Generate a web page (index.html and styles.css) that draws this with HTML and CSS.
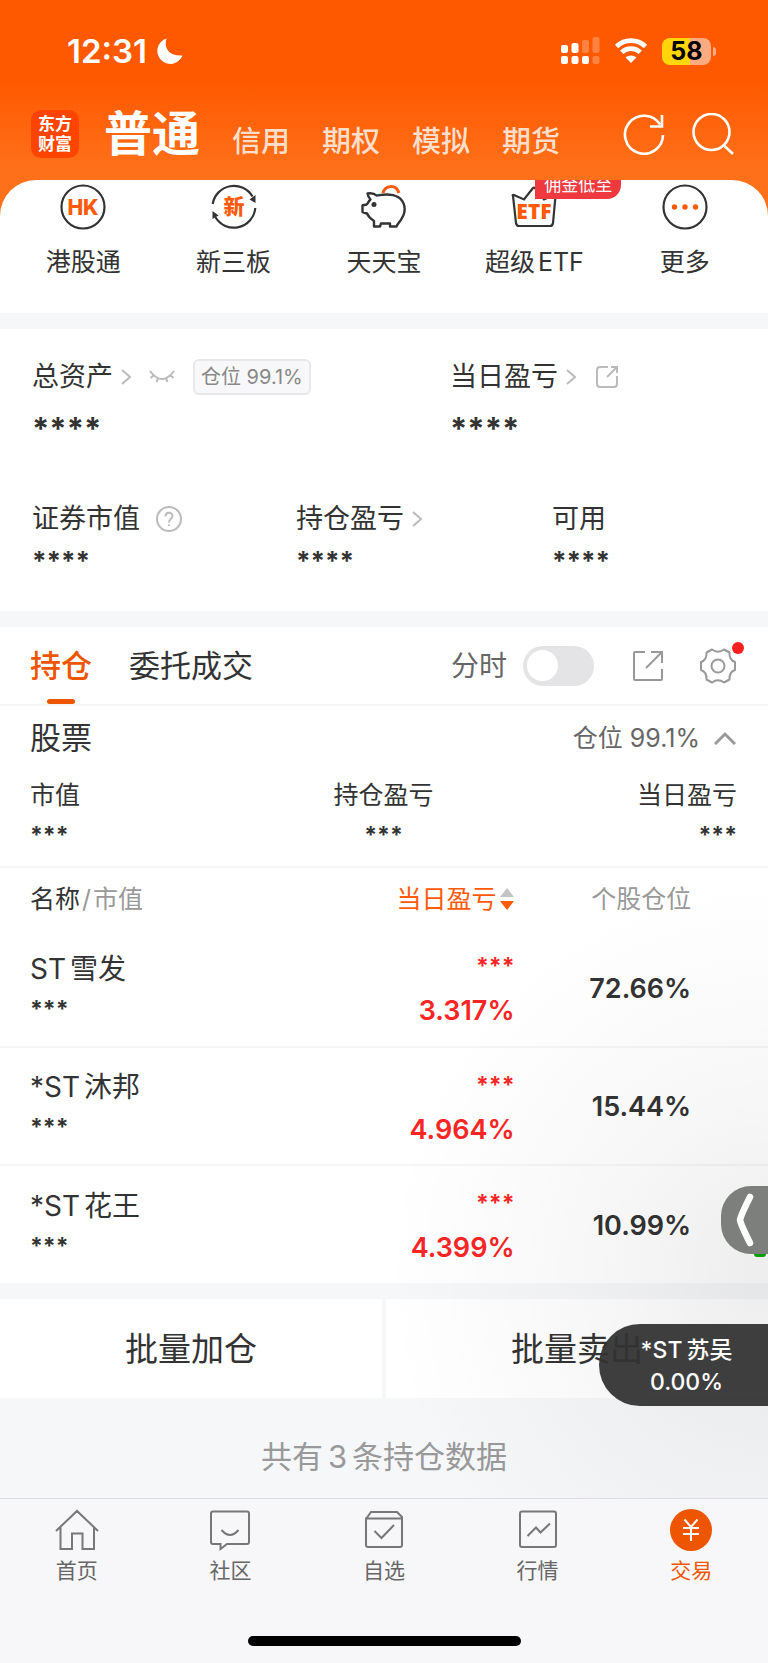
FILE: index.html
```
<!DOCTYPE html>
<html lang="zh-CN">
<head>
    <meta charset="UTF-8">
    <meta name="viewport" content="width=device-width, initial-scale=1.0">
    <title>交易</title>
    <link rel="stylesheet" href="styles.css">
</head>
<body>
    <header class="header">
        <div class="status-bar">
            <span class="time">12:31</span>
            <svg class="moon" width="26" height="26" viewBox="0 0 26 26"><path d="M9.500 .5C7 8 10 18.500 25.500 17.500A13 13 0 1 1 9.500 .5Z" fill="#fff"/></svg>
            <svg class="signal" width="39" height="28" viewBox="0 0 39 28" fill="#fff">
                <rect x="0" y="8" width="7" height="8" rx="2"/><rect x="10.500" y="6" width="7" height="10" rx="2"/>
                <rect x="21" y="3" width="7" height="13" rx="2" opacity=".25"/><rect x="31.500" y="0" width="7" height="16" rx="2" opacity=".25"/>
                <rect x="0" y="19" width="7" height="8" rx="2"/><rect x="10.500" y="19" width="7" height="8" rx="2"/><rect x="21" y="19" width="7" height="8" rx="2"/>
                <rect x="31.500" y="19" width="7" height="8" rx="2" opacity=".25"/>
            </svg>
            <svg class="wifi" width="34" height="26" viewBox="0 0 34 26">
                <path d="M2.500 8.500A21 21 0 0 1 31.500 8.500M7.700 14.300A13.500 13.500 0 0 1 26.300 14.300" fill="none" stroke="#fff" stroke-width="4.800"/>
                <path d="M11.500 19.300Q17 15.500 22.500 19.300L17 25Z" fill="#fff"/>
            </svg>
            <div class="battery">58</div>
        </div>
        <nav class="top-nav">
            <a href="#" class="logo">东方<br>财富</a>
            <a href="#" class="current">普通</a>
            <a href="#">信用</a>
            <a href="#">期权</a>
            <a href="#">模拟</a>
            <a href="#">期货</a>
            <div class="top-actions">
                <button type="button" aria-label="刷新">
                    <svg width="42" height="42" viewBox="0 0 42 42" fill="none" stroke="#fff" stroke-width="2.600"><path d="M40 22A19 19 0 1 1 37 11.500M39 2V13.500H27"/></svg>
                </button>
                <button type="button" aria-label="搜索">
                    <svg width="42" height="42" viewBox="0 0 42 42" fill="none" stroke="#fff" stroke-width="2.600"><circle cx="19.500" cy="19" r="18"/><path d="M31.500 32L41 41"/></svg>
                </button>
            </div>
        </nav>
    </header>

    <main>
        <nav class="shortcuts">
            <a href="#">
                <svg width="46" height="46" viewBox="0 0 46 46"><circle cx="23" cy="23" r="21.500" fill="none" stroke="#333" stroke-width="2.200"/><text x="23" y="30.500" class="icon-text">HK</text></svg>
                <span>港股通</span>
            </a>
            <a href="#">
                <svg width="46" height="46" viewBox="0 0 46 46">
                    <path d="M1.700 20A21.500 21.500 0 0 1 41.500 12.500M44.300 24A21.500 21.500 0 0 1 4.300 33" fill="none" stroke="#333" stroke-width="2.200"/>
                    <path d="M44.500 11L44.500 19L38.500 15.500ZM1.500 35L1.500 27L7.500 31.500Z" fill="#333"/>
                    <text x="23" y="30" class="icon-text">新</text>
                </svg>
                <span>新三板</span>
            </a>
            <a href="#">
                <svg width="46" height="46" viewBox="0 0 46 46" fill="none" stroke="#333" stroke-width="2.400" stroke-linejoin="round">
                    <path d="M15.500 11.500C13 9 10 9 6.500 9.500C7 12.500 8 14 9.500 15.500C7 17.500 7 20 5.500 20.500L1.500 21.500V28L6 29.500C7.500 33 10 35 13 37V42.500H19L20 39.500H29V42.500H35.500C37 39 39 38 41 34C46 26 43.500 17 37 13C30 9 22 10.500 15.500 11.500Z"/>
                    <circle cx="13" cy="20.500" r="2.500" fill="#333" stroke="none"/>
                    <path d="M22 9C24 1 35 0 38 9" stroke="#ff5a0a" stroke-width="3"/>
                </svg>
                <span>天天宝</span>
            </a>
            <a href="#">
                <svg width="46" height="46" viewBox="0 0 46 46">
                    <path d="M2 12Q1 10.500 3 11L13 15.500L22 4Q23 3 24 4L33 15.500L43 11Q45 10.500 44.500 12L42 39Q41.500 42 39 42H8Q5.500 42 5 39Z" fill="none" stroke="#333" stroke-width="2.200"/>
                    <text x="23" y="35" class="icon-text etf">ETF</text>
                </svg>
                <span>超级<span class="latin">ETF</span></span>
                <em class="badge">佣金低至</em>
            </a>
            <a href="#">
                <svg width="46" height="46" viewBox="0 0 46 46"><circle cx="23" cy="23" r="21.500" fill="none" stroke="#333" stroke-width="2.200"/><g fill="#ff5a0a"><circle cx="12.500" cy="23" r="2.700"/><circle cx="23" cy="23" r="2.700"/><circle cx="33.500" cy="23" r="2.700"/></g></svg>
                <span>更多</span>
            </a>
        </nav>

        <section class="assets">
            <div class="assets-main">
                <div>
                    <div class="label">总资产
                        <svg class="arrow" width="10" height="16" viewBox="0 0 10 16"><path d="M1 1L9 8L1 15"/></svg>
                        <svg class="eye" width="26" height="14" viewBox="0 0 26 14"><path d="M1 1Q13 17 25 1M5 5L1.500 8M9 8.500L7.500 12M17 8.500L18.500 12M21 5L24.500 8"/></svg>
                        <span class="ratio">仓位 99.1%</span>
                    </div>
                    <div class="stars large">****</div>
                </div>
                <div>
                    <div class="label">当日盈亏
                        <svg class="arrow" width="10" height="16" viewBox="0 0 10 16"><path d="M1 1L9 8L1 15"/></svg>
                        <svg class="share" width="24" height="24" viewBox="0 0 24 24"><path d="M13 2H5Q2 2 2 5V19Q2 22 5 22H19Q22 22 22 19V11M12 12L22 2M16 2H22V8"/></svg>
                    </div>
                    <div class="stars large">****</div>
                </div>
            </div>
            <div class="assets-sub">
                <div>
                    <div class="label">证券市值
                        <svg class="help" width="26" height="26" viewBox="0 0 26 26"><circle cx="13" cy="13" r="12"/><path d="M9.500 10.500C9.500 5.500 16.500 5.500 16.500 10C16.500 13 13 12.500 13 16.500M13 18.500V20"/></svg>
                    </div>
                    <div class="stars">****</div>
                </div>
                <div>
                    <div class="label">持仓盈亏
                        <svg class="arrow" width="10" height="16" viewBox="0 0 10 16"><path d="M1 1L9 8L1 15"/></svg>
                    </div>
                    <div class="stars">****</div>
                </div>
                <div>
                    <div class="label">可用</div>
                    <div class="stars">****</div>
                </div>
            </div>
        </section>

        <section class="holdings">
            <div class="tabs">
                <button type="button" class="tab active">持仓</button>
                <button type="button" class="tab">委托成交</button>
                <label class="switch">分时<input type="checkbox"></label>
                <button type="button" aria-label="分享">
                    <svg width="32" height="32" viewBox="0 0 32 32" fill="none" stroke="#999" stroke-width="2"><path d="M13 2H3Q2 2 2 3V29Q2 30 3 30H29Q30 30 30 29V19M14 18L30 2M19 2H30V13"/></svg>
                </button>
                <button type="button" class="settings" aria-label="设置">
                    <svg width="36" height="36" viewBox="0 0 36 36" fill="none" stroke="#999" stroke-width="2" stroke-linejoin="round"><path d="M12 1.500Q18 6 24 1.500L29.500 4.500Q29 12 35 14V22Q29 24 29.500 31.500L24 34.500Q18 30 12 34.500L6.500 31.500Q7 24 1 22V14Q7 12 6.500 4.500Z"/><circle cx="18" cy="18" r="6.500"/></svg>
                </button>
            </div>
            <div class="group-title">
                <h2>股票</h2>
                <button type="button">仓位 99.1%
                    <svg width="22" height="14" viewBox="0 0 22 14" fill="none" stroke="#999" stroke-width="3"><path d="M1 13L11 3L21 13"/></svg>
                </button>
            </div>
            <div class="summary">
                <div>市值<div class="stars small">***</div></div>
                <div>持仓盈亏<div class="stars small">***</div></div>
                <div>当日盈亏<div class="stars small">***</div></div>
            </div>
            <table>
                <thead>
                    <tr>
                        <th>名称<span>/</span><span>市值</span></th>
                        <th class="sorted">当日盈亏<svg width="16" height="22" viewBox="0 0 16 22"><path d="M8 0L15 9H1Z" fill="#c4c4c4"/><path d="M1 13H15L8 22Z" fill="#ff5a0a"/></svg></th>
                        <th>个股仓位</th>
                        <th></th>
                    </tr>
                </thead>
                <tbody>
                    <tr>
                        <td><div class="name">ST<span>雪发</span></div><div class="stars small">***</div></td>
                        <td class="up"><div class="stars small">***</div><div class="rate">3.317%</div></td>
                        <td>72.66%</td>
                        <td></td>
                    </tr>
                    <tr>
                        <td><div class="name">*ST<span>沐邦</span></div><div class="stars small">***</div></td>
                        <td class="up"><div class="stars small">***</div><div class="rate">4.964%</div></td>
                        <td>15.44%</td>
                        <td></td>
                    </tr>
                    <tr>
                        <td><div class="name">*ST<span>花王</span></div><div class="stars small">***</div></td>
                        <td class="up"><div class="stars small">***</div><div class="rate">4.399%</div></td>
                        <td>10.99%</td>
                        <td></td>
                    </tr>
                </tbody>
            </table>
        </section>

        <div class="batch">
            <button type="button">批量加仓</button>
            <button type="button">批量卖出</button>
        </div>
        <p class="count">共有<span>3</span>条持仓数据</p>

        <div class="shade"></div>
        <button type="button" class="drawer" aria-label="展开">
            <svg width="18" height="54" viewBox="0 0 18 54" fill="none" stroke="#fff" stroke-width="6.500" stroke-linecap="round" stroke-linejoin="round"><path d="M14 4Q5 22 4 27Q5 32 14 50"/></svg>
        </button>
        <a href="#" class="ticker">*ST<span>苏吴</span><br>0.00%</a>
    </main>

    <footer>
        <nav class="tab-bar">
            <a href="#">
                <svg width="44" height="42" viewBox="0 0 44 42"><path d="M1 22L22 2L43 22M5.500 18V40H17V24.500H27.500V40H39V18"/></svg>
                首页
            </a>
            <a href="#">
                <svg width="44" height="42" viewBox="0 0 44 42"><path d="M5 2.500H39Q41 2.500 41 4.500V33Q41 35 39 35H19L12.500 40V35H5Q3 35 3 33V4.500Q3 2.500 5 2.500ZM13.500 21Q22 31 30.500 21"/></svg>
                社区
            </a>
            <a href="#">
                <svg width="44" height="42" viewBox="0 0 44 42"><path d="M4 10L9 3H35L40 8V36Q40 38 38 38H6Q4 38 4 36V9.500H40M12.500 22L19.500 29L32 16"/></svg>
                自选
            </a>
            <a href="#">
                <svg width="44" height="42" viewBox="0 0 44 42"><path d="M6 2.500H38Q40 2.500 40 4.500V36Q40 38 38 38H6Q4 38 4 36V4.500Q4 2.500 6 2.500ZM11.500 27L20 18.500L24.500 23.500L34 14.500"/></svg>
                行情
            </a>
            <a href="#" class="active">
                <svg width="44" height="42" viewBox="0 0 44 42"><circle cx="22" cy="21" r="21"/><path d="M15.500 10.500L22 18L28.500 10.500M22 18V32M14 19H30M14 25H30"/></svg>
                交易
            </a>
        </nav>
        <div class="home-bar"></div>
    </footer>
</body>
</html>
```
FILE: styles.css
```
* {
    box-sizing: border-box;
}
body {
    margin: 0;
    background-color: #f6f7f9;
    color: #333;
    font-family: Inter, "Noto Sans CJK SC", sans-serif;
    font-size: 25px;
    line-height: 40px;
}
a {
    color: inherit;
    text-decoration: none;
}
button {
    padding: 0;
    border: none;
    background: none;
    color: inherit;
    font: inherit;
    cursor: pointer;
}
svg {
    display: block;
    flex-shrink: 0;
}

/* Header */
.header {
    height: 220px;
    background: linear-gradient(#ff5900 80px, #ff701a 170px);
    color: #fff;
}
.status-bar {
    display: flex;
    align-items: center;
    height: 102px;
    padding: 0 57px 0 67px;
}
.time {
    font-size: 33px;
    font-weight: 600;
}
.moon {
    margin-left: 10px;
}
.signal {
    margin-left: auto;
}
.wifi {
    margin-left: 14px;
}
.battery {
    position: relative;
    width: 49px;
    height: 27px;
    margin-left: 14px;
    border-radius: 8px;
    background: linear-gradient(90deg, #ffd60a 57%, #ffab82 57%);
    color: #000;
    font-size: 25px;
    font-weight: 700;
    line-height: 27px;
    text-align: center;
}
.battery::after {
    content: "";
    position: absolute;
    top: 9px;
    right: -5px;
    width: 3px;
    height: 9px;
    border-radius: 0 4px 4px 0;
    background-color: #ffab82;
}
.top-nav {
    display: flex;
    align-items: flex-end;
    gap: 32px;
    height: 60px;
    padding: 0 34px 0 31px;
    font-size: 29px;
    font-weight: 500;
    color: #ffdfcc;
}
.top-nav .current {
    margin-left: -7px;
    color: #fff;
    font-size: 48px;
    font-weight: 700;
    line-height: 56px;
}
.top-nav .logo {
    width: 48px;
    height: 48px;
    margin-bottom: 4px;
    padding-top: 4px;
    border-radius: 10px;
    background-color: #ff4400;
    color: #fff;
    font-size: 17px;
    font-weight: 700;
    line-height: 20px;
    text-align: center;
}
.top-actions {
    display: flex;
    gap: 27px;
    margin: 0 0 7px auto;
}

main {
    position: relative;
    margin-top: -40px;
}

/* Shortcuts */
.shortcuts {
    display: grid;
    grid-template-columns: repeat(5, 1fr);
    height: 133px;
    padding: 4px 8px 0;
    overflow: hidden;
    border-radius: 36px 36px 0 0;
    background-color: #fff;
}
.shortcuts a {
    position: relative;
    display: flex;
    flex-direction: column;
    align-items: center;
    gap: 12px;
}
.latin {
    margin-left: 3px;
}
.icon-text {
    fill: #ff5a0a;
    font-size: 21px;
    font-weight: 800;
    text-anchor: middle;
}
.icon-text.etf {
    font-family: "Open Sans", sans-serif;
}
.badge {
    position: absolute;
    top: -12px;
    left: 76px;
    height: 27px;
    padding: 0 9px;
    border-radius: 0 0 14px 0;
    background-color: #ee3a3f;
    color: #fff;
    font-size: 17px;
    font-style: normal;
    line-height: 27px;
    white-space: nowrap;
}

/* Assets */
.assets {
    margin: 16px 0;
    padding: 28px 33px 30px 32px;
    background-color: #fff;
}
.assets-main {
    display: grid;
    grid-template-columns: 418fr 285fr;
}
.assets-sub {
    display: grid;
    grid-template-columns: 264fr 256fr 183fr;
    margin-top: 50px;
}
.label {
    display: flex;
    align-items: center;
    font-size: 27px;
}
.label svg {
    fill: none;
    stroke: #bbb;
    stroke-width: 2;
}
.label .arrow {
    margin-left: 8px;
}
.label .eye {
    margin-left: 18px;
}
.label .share {
    margin-left: 19px;
}
.label .help {
    margin-left: 16px;
}
.ratio {
    margin-left: 18px;
    padding: 0 6px;
    border: 2px solid #e8e8ea;
    border-radius: 6px;
    background-color: #f8f8fa;
    color: #888;
    font-size: 20px;
    line-height: 32px;
}
.stars {
    margin-top: 2px;
    font-size: 26px;
    font-weight: 700;
    line-height: 40px;
}
.stars.large {
    margin-top: 12px;
    font-size: 31px;
}
.stars.small {
    margin-top: 0;
    font-size: 23px;
}

/* Holdings */
.holdings {
    background-color: #fff;
}
.tabs {
    display: flex;
    align-items: center;
    height: 79px;
    padding: 0 32px 0 30px;
    border-bottom: 2px solid #f6f6f8;
}
.tab {
    position: relative;
    height: 77px;
    margin-right: 37px;
    font-size: 31px;
}
.tab.active {
    color: #ee5500;
    font-weight: 500;
}
.tab.active::after {
    content: "";
    position: absolute;
    bottom: 0;
    left: 50%;
    width: 28px;
    height: 5px;
    margin-left: -14px;
    border-radius: 3px;
    background-color: #ee5500;
}
.switch {
    display: flex;
    align-items: center;
    gap: 16px;
    margin: 0 38px 0 auto;
    color: #666;
    font-size: 28px;
}
.switch input {
    display: flex;
    align-items: center;
    width: 71px;
    height: 40px;
    margin: 0;
    padding: 0 4px;
    border-radius: 20px;
    background-color: #e4e4e6;
    appearance: none;
}
.switch input::before {
    content: "";
    width: 31px;
    height: 31px;
    border-radius: 50%;
    background-color: #fff;
}
.switch input:checked::before {
    margin-left: auto;
}
.settings {
    position: relative;
    margin-left: 36px;
}
.settings::after {
    content: "";
    position: absolute;
    top: -6px;
    right: -8px;
    width: 12px;
    height: 12px;
    border-radius: 50%;
    background-color: #fa2020;
}
.group-title {
    display: flex;
    align-items: center;
    justify-content: space-between;
    height: 64px;
    padding: 0 32px 0 30px;
}
.group-title h2 {
    margin: 0;
    font-size: 31px;
    font-weight: 400;
}
.group-title button {
    display: flex;
    align-items: center;
    gap: 14px;
    color: #666;
}
.summary {
    display: grid;
    grid-template-columns: 1fr 1fr 1fr;
    height: 98px;
    padding: 5px 31px 0 30px;
    border-bottom: 2px solid #f6f6f8;
}
.summary > div:nth-child(2) {
    text-align: center;
}
.summary > div:nth-child(3) {
    text-align: right;
}
table {
    width: 100%;
    border-collapse: collapse;
    table-layout: fixed;
}
th, td {
    padding: 0;
    text-align: right;
}
th {
    width: 23%;
    height: 61px;
    color: #999;
    font-weight: 400;
}
th:first-child {
    width: 40%;
    color: #333;
}
th:first-child span {
    margin-left: 2px;
    color: #999;
}
th:nth-child(2) {
    width: 27%;
}
th:last-child {
    width: 10%;
}
th:first-child, td:first-child {
    padding-left: 30px;
    text-align: left;
}
th.sorted {
    color: #ff5a0a;
}
.sorted svg {
    display: inline-block;
    margin-left: 2px;
    vertical-align: -2px;
}
td {
    height: 118px;
    padding-top: 2px;
    border-bottom: 2px solid #f6f6f8;
    font-size: 27px;
    font-weight: 600;
}
tbody tr:last-child td {
    border-bottom: none;
}
.name {
    font-size: 28px;
    font-weight: 400;
}
.name span, .ticker span {
    margin-left: 4px;
}
.up {
    color: #fa2525;
}
.rate {
    margin-top: 5px;
}

/* Batch actions */
.batch {
    display: grid;
    grid-template-columns: 1fr 1fr;
    gap: 4px;
    padding-top: 16px;
}
.batch button {
    height: 99px;
    background-color: #fff;
    font-size: 33px;
}
.count {
    margin: 0;
    padding: 39px 0 21px;
    color: #999;
    font-size: 31px;
    text-align: center;
}
.count span {
    margin: 0 5px;
}

/* Floating widgets */
.shade {
    position: absolute;
    right: 0;
    bottom: 0;
    width: 50%;
    height: 640px;
    background: radial-gradient(ellipse 100% 62% at 100% 65%, rgba(0, 0, 0, 0.07), rgba(0, 0, 0, 0.03) 45%, transparent);
    pointer-events: none;
}
.drawer {
    position: absolute;
    top: 1006px;
    right: 0;
    display: flex;
    align-items: center;
    width: 47px;
    height: 68px;
    padding-left: 15px;
    border-radius: 30px 0 0 30px;
    background-color: #7d7f7d;
}
.drawer::after {
    content: "";
    position: absolute;
    bottom: -3px;
    left: 33px;
    width: 12px;
    height: 3px;
    border-radius: 0 0 6px 6px;
    background-color: #0a9f0a;
}
.ticker {
    position: absolute;
    top: 1144px;
    right: 0;
    width: 169px;
    height: 82px;
    padding: 10px 0 0 6px;
    border-radius: 41px 0 0 41px;
    background-color: rgba(50, 50, 50, 0.94);
    color: #fff;
    font-size: 23px;
    font-weight: 500;
    line-height: 32px;
    text-align: center;
}

/* Bottom bar */
footer {
    position: relative;
    border-top: 1px solid #dcdee1;
    background-color: #f7f7f9;
}
.tab-bar {
    display: grid;
    grid-template-columns: repeat(5, 1fr);
    padding-top: 10px;
    color: #666;
    font-size: 21px;
}
.tab-bar a {
    display: flex;
    flex-direction: column;
    align-items: center;
}
.tab-bar svg {
    fill: none;
    stroke: #777;
    stroke-width: 2;
}
.tab-bar .active {
    color: #ee5500;
}
.tab-bar .active circle {
    fill: #ee5500;
    stroke: none;
}
.tab-bar .active path {
    stroke: #fff;
}
.home-bar {
    width: 273px;
    height: 10px;
    margin: 45px auto 0;
    border-radius: 5px;
    background-color: #000;
}
footer::after {
    content: "";
    display: block;
    height: 16px;
}
```
